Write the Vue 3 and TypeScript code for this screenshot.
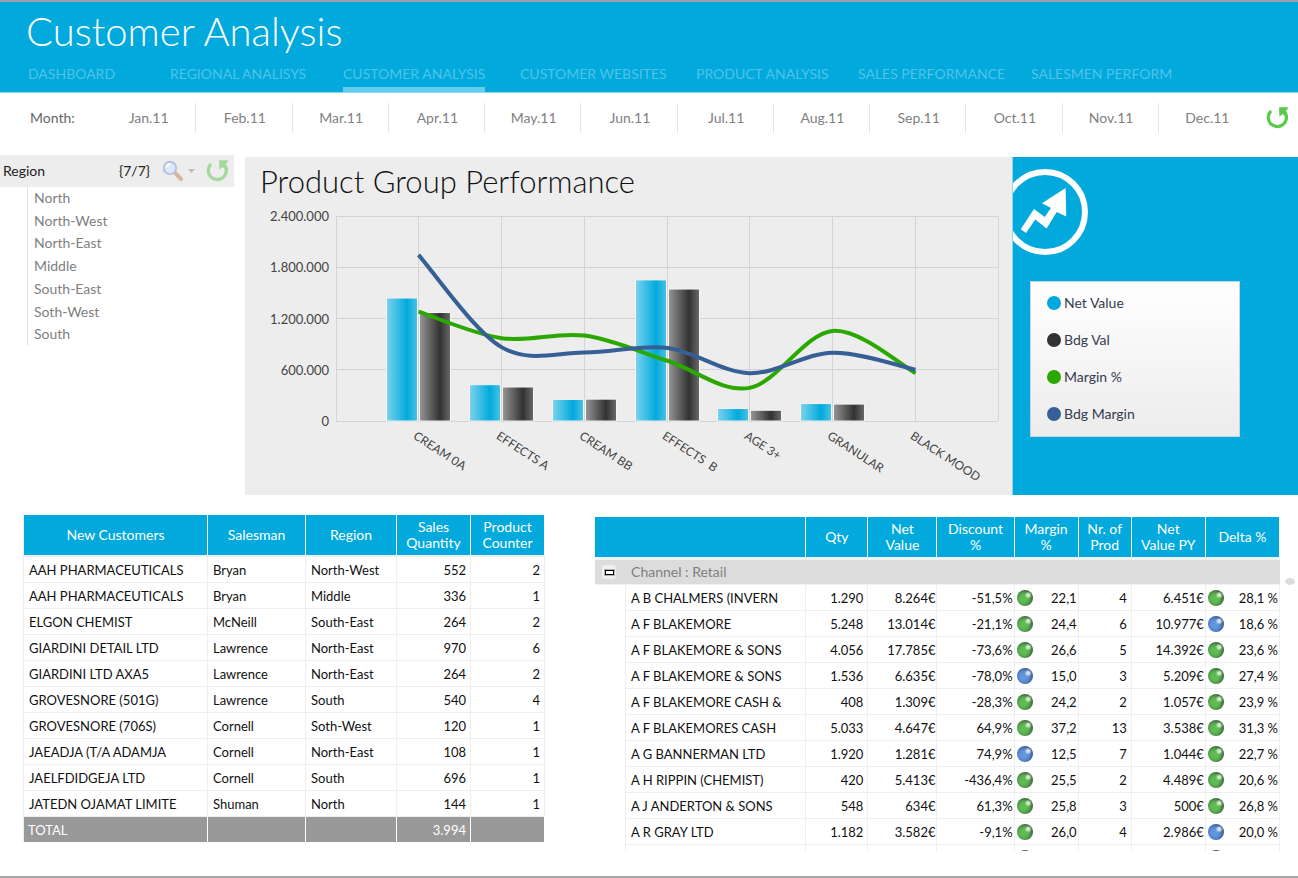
<script setup lang="ts">
interface TableColumn { label: string; width: number }
interface Customer { name: string; salesman: string; region: string; qty: string; count: string }
interface RetailRow { name: string; qty: string; net: string; discount: string; margin: string; marginTone: string; prod: string; py: string; delta: string; deltaTone: string }

const pages = ['DASHBOARD', 'REGIONAL ANALISYS', 'CUSTOMER ANALYSIS', 'CUSTOMER WEBSITES', 'PRODUCT ANALYSIS', 'SALES PERFORMANCE', 'SALESMEN PERFORM']
const months = ['Jan.11', 'Feb.11', 'Mar.11', 'Apr.11', 'May.11', 'Jun.11', 'Jul.11', 'Aug.11', 'Sep.11', 'Oct.11', 'Nov.11', 'Dec.11']
const regions = ['North', 'North-West', 'North-East', 'Middle', 'South-East', 'Soth-West', 'South']

const PLOT = { left: 91, right: 753, top: 9, bottom: 214, max: 2400000 }
const STEP = (PLOT.right - PLOT.left) / 8
const y = (v: number) => PLOT.bottom - (v / PLOT.max) * (PLOT.bottom - PLOT.top)
const x = (i: number) => Math.floor(PLOT.left + STEP * (i + 1)) + 0.5

const ticks = [
  { label: '2.400.000', value: 2400000 },
  { label: '1.800.000', value: 1800000 },
  { label: '1.200.000', value: 1200000 },
  { label: '600.000', value: 600000 },
  { label: '0', value: 0 },
]
const groups = [
  { name: 'CREAM 0A', net: 1440000, bdg: 1270000, margin: 1280000, bdgMargin: 1945000 },
  { name: 'EFFECTS A', net: 425000, bdg: 398000, margin: 970000, bdgMargin: 865000 },
  { name: 'CREAM BB', net: 253000, bdg: 256000, margin: 1000000, bdgMargin: 802000 },
  { name: 'EFFECTS  B', net: 1652000, bdg: 1545000, margin: 705000, bdgMargin: 855000 },
  { name: 'AGE 3+', net: 147000, bdg: 126000, margin: 388000, bdgMargin: 560000 },
  { name: 'GRANULAR', net: 204000, bdg: 198000, margin: 1055000, bdgMargin: 800000 },
  { name: 'BLACK MOOD', net: 0, bdg: 0, margin: 560000, bdgMargin: 600000 },
]

// Smooth line through the points, each tangent taken from the two neighbours.
function curve(values: number[]): string {
  const p = values.map((v, i) => [x(i), y(v)])
  const at = (i: number) => p[Math.max(0, Math.min(p.length - 1, i))]
  let d = `M${p[0][0]} ${p[0][1]}`
  for (let i = 0; i < p.length - 1; i++) {
    const a = at(i - 1), b = at(i), c = at(i + 1), e = at(i + 2)
    d += ` C${b[0] + (c[0] - a[0]) / 6} ${b[1] + (c[1] - a[1]) / 6} ${c[0] - (e[0] - b[0]) / 6} ${c[1] - (e[1] - b[1]) / 6} ${c[0]} ${c[1]}`
  }
  return d
}
const marginPath = curve(groups.map(g => g.margin))
const bdgMarginPath = curve(groups.map(g => g.bdgMargin))

const legend = [
  { label: 'Net Value', tone: 'net' },
  { label: 'Bdg Val', tone: 'bdg' },
  { label: 'Margin %', tone: 'margin' },
  { label: 'Bdg Margin', tone: 'bdg-margin' },
]

const customerCols: TableColumn[] = [
  { label: 'New Customers', width: 184 },
  { label: 'Salesman', width: 98 },
  { label: 'Region', width: 91 },
  { label: 'Sales Quantity', width: 74 },
  { label: 'Product Counter', width: 74 },
]
const customers: Customer[] = [
  ['AAH PHARMACEUTICALS', 'Bryan', 'North-West', '552', '2'],
  ['AAH PHARMACEUTICALS', 'Bryan', 'Middle', '336', '1'],
  ['ELGON CHEMIST', 'McNeill', 'South-East', '264', '2'],
  ['GIARDINI DETAIL LTD', 'Lawrence', 'North-East', '970', '6'],
  ['GIARDINI LTD AXA5', 'Lawrence', 'North-East', '264', '2'],
  ['GROVESNORE (501G)', 'Lawrence', 'South', '540', '4'],
  ['GROVESNORE (706S)', 'Cornell', 'Soth-West', '120', '1'],
  ['JAEADJA (T/A ADAMJA', 'Cornell', 'North-East', '108', '1'],
  ['JAELFDIDGEJA LTD', 'Cornell', 'South', '696', '1'],
  ['JATEDN OJAMAT LIMITE', 'Shuman', 'North', '144', '1'],
].map(([name, salesman, region, qty, count]) => ({ name, salesman, region, qty, count }))

const retailCols = [31, 180, 62, 69, 77, 64, 53, 74, 74]
const retailHeads = ['Qty', 'Net Value', 'Discount %', 'Margin %', 'Nr. of Prod', 'Net Value PY', 'Delta %']
const retail: RetailRow[] = [
  ['A B CHALMERS (INVERN', '1.290', '8.264€', '-51,5%', '22,1', 'green', '4', '6.451€', '28,1 %', 'green'],
  ['A F BLAKEMORE', '5.248', '13.014€', '-21,1%', '24,4', 'green', '6', '10.977€', '18,6 %', 'blue'],
  ['A F BLAKEMORE & SONS', '4.056', '17.785€', '-73,6%', '26,6', 'green', '5', '14.392€', '23,6 %', 'green'],
  ['A F BLAKEMORE & SONS', '1.536', '6.635€', '-78,0%', '15,0', 'blue', '3', '5.209€', '27,4 %', 'green'],
  ['A F BLAKEMORE CASH &', '408', '1.309€', '-28,3%', '24,2', 'green', '2', '1.057€', '23,9 %', 'green'],
  ['A F BLAKEMORES CASH', '5.033', '4.647€', '64,9%', '37,2', 'green', '13', '3.538€', '31,3 %', 'green'],
  ['A G BANNERMAN LTD', '1.920', '1.281€', '74,9%', '12,5', 'blue', '7', '1.044€', '22,7 %', 'green'],
  ['A H RIPPIN (CHEMIST)', '420', '5.413€', '-436,4%', '25,5', 'green', '2', '4.489€', '20,6 %', 'green'],
  ['A J ANDERTON & SONS', '548', '634€', '61,3%', '25,8', 'green', '3', '500€', '26,8 %', 'green'],
  ['A R GRAY LTD', '1.182', '3.582€', '-9,1%', '26,0', 'green', '4', '2.986€', '20,0 %', 'blue'],
  ['', '', '', '', '', 'green', '', '', '', 'green'],
].map(([name, qty, net, discount, margin, marginTone, prod, py, delta, deltaTone]) => ({ name, qty, net, discount, margin, marginTone, prod, py, delta, deltaTone }))

const share = (w: number, all: number[]) => ({ width: `${(w / all.reduce((a, b) => a + b, 0)) * 100}%` })
const customerWidths = customerCols.map(c => c.width)
</script>

<template>
  <div class="page">
    <header class="banner">
      <h1>Customer Analysis</h1>
      <nav class="tabs" aria-label="Pages">
        <a v-for="p in pages" :key="p" href="#" :class="{ active: p === 'CUSTOMER ANALYSIS' }">{{ p }}</a>
      </nav>
    </header>

    <div class="months" role="group" aria-label="Month">
      <span class="months-label">Month:</span>
      <button v-for="m in months" :key="m" type="button" class="month">{{ m }}</button>
      <button type="button" class="reset" aria-label="Reset months">
        <svg class="icon" viewBox="0 0 24 24"><path class="arc" d="M5.6 5.4A8.4 8.4 0 1 0 18.6 7.2" /><path class="tip" d="M13 2H21.8L19.2 6L20.6 8.6L18 10L16.3 8.3L13.3 10.8Z" /></svg>
      </button>
    </div>

    <div class="upper">
      <section class="regions">
        <div class="regions-head">
          <h2>Region</h2>
          <span class="count">{7/7}</span>
          <button type="button" class="search" aria-label="Search regions">
            <svg class="lens" viewBox="0 0 22 22"><path class="grip" d="M13.5 13.5L19 19" /><circle class="glass" cx="8" cy="8" r="6.2" /><path class="shine" d="M4.5 7.5A3.8 3.8 0 0 1 8 4" /></svg>
            <svg class="caret" viewBox="0 0 7 4"><path d="M0 0H7L3.5 4Z" /></svg>
          </button>
          <button type="button" class="reset faded" aria-label="Reset regions">
            <svg class="icon" viewBox="0 0 24 24"><path class="arc" d="M5.6 5.4A8.4 8.4 0 1 0 18.6 7.2" /><path class="tip" d="M13 2H21.8L19.2 6L20.6 8.6L18 10L16.3 8.3L13.3 10.8Z" /></svg>
          </button>
        </div>
        <ul>
          <li v-for="r in regions" :key="r"><button type="button">{{ r }}</button></li>
        </ul>
      </section>

      <section class="chart">
        <h2>Product Group Performance</h2>
        <svg viewBox="0 0 767 288" role="img" aria-label="Product Group Performance">
          <defs>
            <linearGradient id="netFill"><stop offset="0" stop-color="#7dd3ee" /><stop offset="0.66" stop-color="#02a9dc" /><stop offset="1" stop-color="#4bc2e7" /></linearGradient>
            <linearGradient id="bdgFill"><stop offset="0" stop-color="#969696" /><stop offset="0.66" stop-color="#323232" /><stop offset="1" stop-color="#6b6b6b" /></linearGradient>
          </defs>
          <g class="grid">
            <path v-for="t in ticks" :key="t.label" :d="`M${PLOT.left} ${Math.floor(y(t.value)) + 0.5}H${PLOT.right}`" />
            <path v-for="(g, i) in groups" :key="g.name" :d="`M${x(i)} ${PLOT.top}V${PLOT.bottom}`" />
            <path :d="`M${PLOT.left + 0.5} ${PLOT.top}V${PLOT.bottom}M${PLOT.right + 0.5} ${PLOT.top}V${PLOT.bottom}`" />
          </g>
          <text v-for="t in ticks" :key="t.label" class="tick" x="84" :y="y(t.value) + 5">{{ t.label }}</text>
          <g v-for="(g, i) in groups" :key="g.name">
            <template v-if="g.net > 0">
              <rect class="bar" fill="url(#netFill)" :x="x(i) - 32" :y="y(g.net)" width="31" :height="PLOT.bottom - y(g.net)" />
              <rect class="bar" fill="url(#bdgFill)" :x="x(i) + 1" :y="y(g.bdg)" width="31" :height="PLOT.bottom - y(g.bdg)" />
            </template>
            <text class="group" :transform="`translate(${x(i) - 6} 231) rotate(33)`">{{ g.name }}</text>
          </g>
          <path class="line margin" :d="marginPath" />
          <path class="line bdg-margin" :d="bdgMarginPath" />
        </svg>
      </section>

      <aside class="key">
        <svg class="trend" viewBox="0 0 76 86"><circle cx="32" cy="43" r="40" /><path class="arrow" d="M7.7 60.3L21 40L31.7 48L38 39L29 34.3L52.6 19L53.3 47.5L43.7 43L33.6 59.5L22.3 50.5L13 64Z" /></svg>
        <ul class="legend">
          <li v-for="l in legend" :key="l.label"><i :class="['dot', l.tone]"></i>{{ l.label }}</li>
        </ul>
      </aside>
    </div>

    <div class="lower">
      <table class="customers">
        <colgroup><col v-for="c in customerCols" :key="c.label" :style="share(c.width, customerWidths)" /></colgroup>
        <thead><tr><th v-for="c in customerCols" :key="c.label" scope="col">{{ c.label }}</th></tr></thead>
        <tbody>
          <tr v-for="(c, i) in customers" :key="i">
            <td>{{ c.name }}</td><td>{{ c.salesman }}</td><td>{{ c.region }}</td><td class="num">{{ c.qty }}</td><td class="num">{{ c.count }}</td>
          </tr>
        </tbody>
        <tfoot><tr><td>TOTAL</td><td></td><td></td><td class="num">3.994</td><td></td></tr></tfoot>
      </table>

      <div class="retail-view">
        <table class="retail">
          <colgroup><col v-for="(w, i) in retailCols" :key="i" :style="share(w, retailCols)" /></colgroup>
          <thead><tr><td colspan="2"></td><th v-for="h in retailHeads" :key="h" scope="col" :class="{ wide: h.startsWith('Net') }">{{ h }}</th></tr></thead>
          <tbody>
            <tr class="channel">
              <td><button type="button" aria-label="Collapse Retail"><i></i></button></td>
              <th colspan="8" scope="colgroup">Channel : Retail</th>
            </tr>
            <tr v-for="(r, i) in retail" :key="i">
              <td class="indent"></td>
              <td>{{ r.name }}</td>
              <td class="num">{{ r.qty }}</td>
              <td class="num tight">{{ r.net }}</td>
              <td class="num tight">{{ r.discount }}</td>
              <td class="tight"><div class="status"><i :class="['orb', r.marginTone]"></i>{{ r.margin }}</div></td>
              <td class="num">{{ r.prod }}</td>
              <td class="num tight">{{ r.py }}</td>
              <td class="tight"><div class="status"><i :class="['orb', r.deltaTone]"></i>{{ r.delta }}</div></td>
            </tr>
          </tbody>
        </table>
      </div>
      <span class="scroll-dot"></span>
    </div>
  </div>
</template>

<style>
body { margin: 0; background: #fff; }
</style>

<style scoped>
.page { display: flex; flex-direction: column; box-sizing: border-box; min-height: 100vh; border-top: 2px solid #9a9fa8; border-bottom: 2px solid #a8a8a8; background: #fff; color: #111; font: 13px/16px Lato, "Liberation Sans", sans-serif; }
h1, h2, ul { margin: 0; padding: 0; font-weight: 400; list-style: none; }
button { padding: 0; border: 0; background: none; color: inherit; font: inherit; cursor: pointer; }

.banner { display: flex; flex-direction: column; justify-content: space-between; height: 90px; border-bottom: 1px solid #8fd8ef; background: #02a9dc; }
h1 { padding: 7px 26px 0; color: #fff; font-size: 40px; font-weight: 300; line-height: 44px; }
.tabs { display: grid; grid-template-columns: 142fr 173fr 177fr 176fr 162fr 173fr 267fr; padding-left: 28px; }
.tabs a { justify-self: start; padding-bottom: 4px; border-bottom: 5px solid transparent; color: #4fc4e8; font-size: 14px; line-height: 18px; text-decoration: none; white-space: nowrap; }
.tabs a.active { border-bottom-color: #62cdee; }

.months { display: flex; align-items: center; height: 30px; padding: 10px 7px 0 30px; color: #808080; font-size: 14px; }
.months-label { width: 70px; color: #666; }
.month { flex: 1; height: 30px; padding-left: 2px; border-right: 1px solid #e6e6e6; }
.month:nth-last-child(2) { border-right: 0; }
.months .reset { margin-left: 11px; }
.reset { width: 26px; height: 26px; }
.icon { display: block; width: 26px; height: 26px; }
.arc { fill: none; stroke: #5cc84c; stroke-width: 3; }
.tip { fill: #5cc84c; }
.faded { opacity: 0.5; }

.upper { display: grid; grid-template-columns: 234px minmax(0, 1fr) 286px; margin-top: 22px; }
.regions { color: #808080; font-size: 14px; }
.regions-head { display: flex; align-items: center; height: 32px; padding: 0 3px; background: #ededed; color: #222; }
.regions-head h2 { flex: 1; font-size: 14px; }
.count { margin-right: 12px; }
.search { display: flex; align-items: center; gap: 4px; margin-right: 10px; }
.lens { width: 22px; height: 22px; }
.glass { fill: #dbe9f8; stroke: #b4c3dc; stroke-width: 2; }
.shine { fill: none; stroke: #fff; stroke-width: 2; }
.grip { stroke: #dbb49b; stroke-width: 4; stroke-linecap: round; }
.caret { width: 7px; height: 4px; fill: #bbb; }
.regions ul { display: grid; height: 159px; margin-left: 27px; border-left: 1px solid #e2e2e2; grid-auto-rows: 1fr; }
.regions li { padding-left: 6px; }
.regions li button { height: 22px; }

.chart { margin: 2px 0 0 11px; background: #ededed; }
.chart h2 { padding: 7px 15px 9px; font-size: 31px; font-weight: 300; line-height: 34px; }
.chart svg { display: block; width: 100%; height: auto; }
.grid path { fill: none; stroke: #d4d4d4; }
.tick { fill: #444; font-size: 13px; text-anchor: end; }
.group { fill: #444; font-size: 12px; white-space: pre; }
.bar { stroke: #f4f4f4; stroke-width: 1; }
.line { fill: none; stroke-width: 4; }
.line.margin { stroke: #2ba800; }
.line.bdg-margin { stroke: #365f95; }

.key { margin-top: 2px; border-left: 1px solid #8fd8ef; box-sizing: border-box; background: #02a9dc; }
.trend { display: block; width: 76px; height: 86px; margin: 12px 0 26px; }
.trend circle { fill: none; stroke: #fff; stroke-width: 6; }
.arrow { fill: #fff; }
.legend { display: grid; gap: 21px; margin: 0 58px 0 17px; padding: 13px 16px 14px; border: 1px solid #c5d5dd; background: linear-gradient(#fff, #ececec); color: #333c4e; font-size: 14px; }
.legend li { display: flex; align-items: center; gap: 3px; }
.dot { width: 14px; height: 14px; border-radius: 50%; }
.dot.net { background: #02a9dc; }
.dot.bdg { background: #333; }
.dot.margin { background: #2ba800; }
.dot.bdg-margin { background: #365f95; }

.lower { display: grid; grid-template-columns: 522fr 685fr; column-gap: 50px; align-items: start; position: relative; margin-top: 20px; padding: 0 18px 0 23px; }
table { width: 100%; border-collapse: separate; border-spacing: 0; table-layout: fixed; }
th, td { box-sizing: border-box; overflow: hidden; white-space: nowrap; }
thead th, thead td { height: 40px; padding: 0 8px; border: solid #fff; border-width: 0 1px 0 0; background: #02a9dc; color: #fff; font-size: 14px; font-weight: 400; white-space: normal; }
tbody td { height: 26px; padding: 0 4px 0 5px; border: solid #eee; border-width: 0 1px 1px 0; text-align: left; }
td.num { text-align: right; }
tbody td.tight { padding: 0 1px; }
.customers { border-left: 1px solid #eee; }
.customers tbody tr:first-child td { height: 28px; border-top: 2px solid #eee; }
tfoot td { height: 25px; padding: 0 4px; border-right: 1px solid #fff; background: #999; color: #fff; }

.retail-view { height: 334px; margin-top: 2px; overflow: hidden; }
.retail thead th { padding: 0 4px; }
.retail thead th.wide { padding: 0 8px; }
.channel td, .channel th { height: 28px; padding: 0; border: solid #f2f2f2; border-width: 3px 0 1px; background: #dcdcdc; color: #7f7f7f; font-size: 14px; font-weight: 400; text-align: left; }
.channel th { padding-left: 5px; }
.channel button { display: grid; place-items: center; width: 14px; height: 14px; margin-left: 7px; border-radius: 3px; background: #f0f0f0; }
.channel i { box-sizing: border-box; width: 9px; height: 5px; border: 1px solid #000; background: #fff; box-shadow: 0 0 0 1px #0004; }
.retail td.indent { border-bottom: 0; }
.status { display: flex; align-items: center; justify-content: space-between; padding-left: 1px; }
.orb { width: 16px; height: 16px; border-radius: 50%; }
.orb.green { background: radial-gradient(ellipse at 70% 32%, #d5efcf 0 6%, transparent 24%), radial-gradient(circle at 42% 55%, #5fbb52 25%, #55a44d 45%, #3f6b41 68%, #2d5530 80%); }
.orb.blue { background: radial-gradient(ellipse at 70% 32%, #dbe8fa 0 6%, transparent 24%), radial-gradient(circle at 42% 55%, #6296dc 25%, #5585c9 45%, #3d5e92 68%, #2d456c 80%); }
.scroll-dot { position: absolute; top: 63px; right: 3px; width: 10px; height: 7px; border-radius: 50%; background: #dcdcdc; }
</style>
